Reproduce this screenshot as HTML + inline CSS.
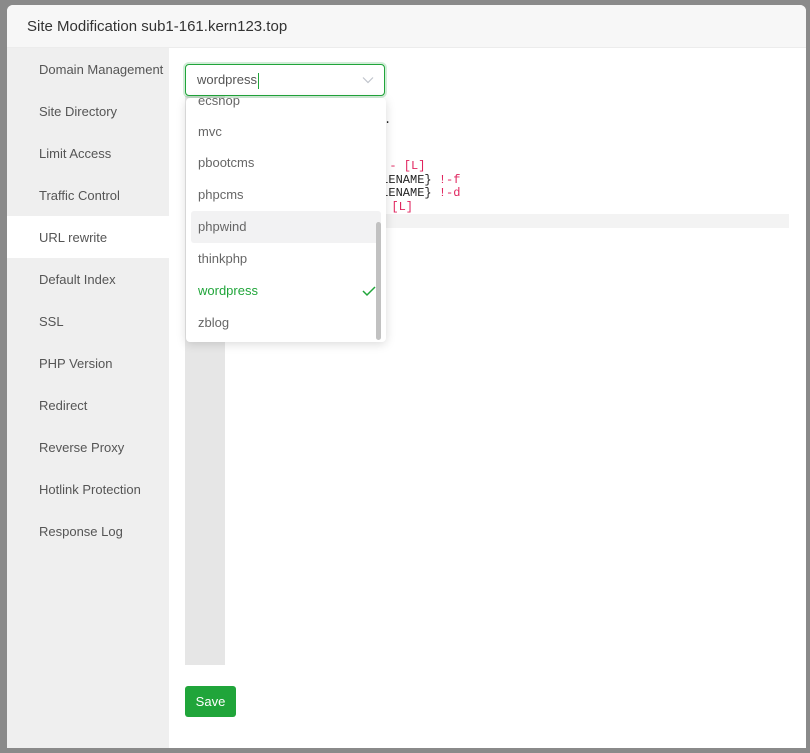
<!DOCTYPE html>
<html><head><meta charset="utf-8"><style>
*{margin:0;padding:0;box-sizing:border-box}
body{width:810px;height:753px;background:#8a8a8a;position:relative;overflow:hidden;font-family:"Liberation Sans",sans-serif}
.dlg{position:absolute;left:7px;top:5px;width:799px;height:743px;background:#fff;border-radius:6px 6px 0 0;overflow:hidden}
.hd{position:absolute;left:0;top:0;right:0;height:43px;background:#f7f7f7;border-bottom:1px solid #ececec;font-size:15px;color:#333;padding-left:20px;line-height:44px}
.sb{position:absolute;left:0;top:43px;width:162px;bottom:0;background:#efefef}
.sb div{height:42px;line-height:44px;padding-left:32px;font-size:13px;color:#555}
.sb .act{background:#fff}
.abs{position:absolute}
.code{font-family:"Liberation Mono",monospace;font-size:12px;line-height:13.5px;color:#222;white-space:pre}
.r{color:#e0245e}
.dd{position:absolute;left:186px;top:98px;width:200px;height:244px;background:#fff;border-radius:4px;box-shadow:0 2px 10px rgba(0,0,0,.15);overflow:hidden}
.it{position:absolute;left:12px;font-size:13px;color:#666}
</style></head><body>
<div class="dlg">
<div class="hd">Site Modification sub1-161.kern123.top</div>
<div class="sb">
<div>Domain Management</div><div>Site Directory</div><div>Limit Access</div><div>Traffic Control</div><div class="act">URL rewrite</div><div>Default Index</div><div>SSL</div><div>PHP Version</div><div>Redirect</div><div>Reverse Proxy</div><div>Hotlink Protection</div><div>Response Log</div>
</div>
</div>
<div class="abs" style="left:185px;top:96px;width:40px;height:569px;background:#e6e6e6"></div>
<div class="abs" style="left:225px;top:214px;width:564px;height:14px;background:#f3f3f3"></div>
<div class="abs code" style="left:384px;top:114px">.</div>
<div class="abs code" style="left:375px;top:160px"><span class="r">s - [L]</span></div>
<div class="abs code" style="left:374px;top:174px">ILENAME} <span class="r">!-f</span></div>
<div class="abs code" style="left:374px;top:187px">ILENAME} <span class="r">!-d</span></div>
<div class="abs code" style="left:377px;top:201px"><span class="r">p [L]</span></div>
<div class="abs" style="left:185px;top:64px;width:200px;height:32px;border:1px solid #20a53a;border-radius:4px;box-shadow:0 0 0 2px rgba(32,165,58,.2);background:#fff;font-size:13px;color:#555;padding-left:11px;line-height:30px">wordpress<span style="display:inline-block;width:1px;height:16px;background:#20a53a;vertical-align:middle;margin-left:1px"></span>
<svg style="position:absolute;right:10px;top:11px" width="12" height="8" viewBox="0 0 12 8"><path d="M1 1.5L6 6.5L11 1.5" fill="none" stroke="#c0c4cc" stroke-width="1.2"/></svg></div>
<div class="dd">
<div class="it" style="top:-5px">ecshop</div>
<div class="it" style="top:26px">mvc</div>
<div class="it" style="top:57px">pbootcms</div>
<div class="it" style="top:89px">phpcms</div>
<div class="abs" style="left:5px;top:113px;width:190px;height:32px;background:#f2f2f3;border-radius:3px"></div>
<div class="it" style="top:121px">phpwind</div>
<div class="it" style="top:153px">thinkphp</div>
<div class="it" style="top:185px;color:#20a53a">wordpress</div>
<svg style="position:absolute;left:176px;top:187px" width="14" height="12" viewBox="0 0 14 12"><path d="M1 6L5 10L13 2" fill="none" stroke="#20a53a" stroke-width="1.5"/></svg>
<div class="it" style="top:217px">zblog</div>
<div class="abs" style="left:190px;top:124px;width:5px;height:118px;background:#c1c1c1;border-radius:3px"></div>
</div>
<div class="abs" style="left:185px;top:686px;width:51px;height:31px;background:#20a53a;border-radius:3px;color:#fff;font-size:13px;text-align:center;line-height:31px">Save</div>
</body></html>
